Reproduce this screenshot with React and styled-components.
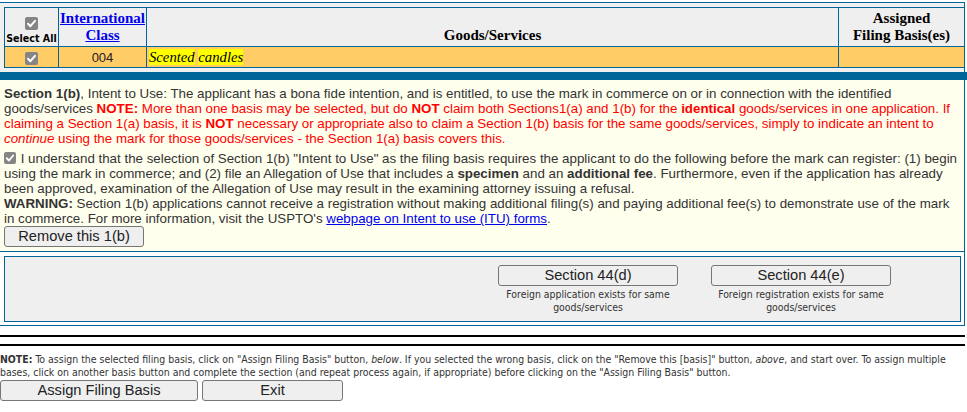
import React from "react";
import styled, { createGlobalStyle } from "styled-components";

const BLUE = "#006699";

const GlobalStyle = createGlobalStyle`
  html, body { margin: 0; padding: 0; background: #ffffff; }
  body { font-family: "Liberation Sans", Arial, sans-serif; }
`;

const Page = styled.div`
  width: 967px;
  padding-top: 2px;
`;

const GoodsPanel = styled.div`
  width: 965px;
  box-sizing: border-box;
  border-top: 1px solid ${BLUE};
  border-right: 1px solid ${BLUE};
  background: #f0f0f0;
  padding: 4px 0 4px 4px;
`;

const GoodsTable = styled.table`
  border-collapse: collapse;
  table-layout: fixed;
  width: 960px;
`;

const Col = styled.col`
  width: ${(p) => p.$w}px;
`;

const HeadCell = styled.th`
  border: 1px solid ${BLUE};
  background: #efefef;
  padding: 0 1px 3px;
  vertical-align: bottom;
  text-align: center;
  font-family: "Liberation Serif", "Times New Roman", serif;
  font-size: 15px;
  line-height: 16.5px;
  font-weight: bold;
  color: #000;
  height: 35px;
`;

const HeadLink = styled.a`
  color: #0000ee;
  text-decoration: underline;
`;

const SelectAllLabel = styled.span`
  display: block;
  margin: 0 -2px -2px;
  white-space: nowrap;
  font-family: "DejaVu Sans Condensed", "DejaVu Sans", sans-serif;
  font-size: 10.6px;
  line-height: 13px;
  font-weight: bold;
  color: #000;
`;

const Row = styled.tr`
  background: #ffcc66;
  height: 21px;
`;

const Cell = styled.td`
  border: 1px solid ${BLUE};
  padding: 0 2px;
  text-align: ${(p) => p.$align || "left"};
  vertical-align: middle;
  font-family: ${(p) =>
    p.$serif
      ? '"Liberation Serif", "Times New Roman", serif'
      : '"Liberation Sans", Arial, sans-serif'};
  font-size: ${(p) => (p.$serif ? "14.7px" : "13px")};
  color: #222;
`;

const Highlight = styled.span`
  background: #ffff00;
  font-style: italic;
  color: #000;
`;

const CheckBox = styled.span`
  display: ${(p) => (p.$block ? "block" : "inline-block")};
  width: ${(p) => p.$size || 13}px;
  height: ${(p) => p.$size || 13}px;
  margin: ${(p) => p.$margin || "0"};
  border-radius: 2px;
  background: #858585;
  vertical-align: ${(p) => p.$valign || "middle"};
  position: relative;
  & > svg {
    position: absolute;
    left: 0;
    top: 0;
    width: 100%;
    height: 100%;
  }
`;

const Check = (props) => (
  <CheckBox {...props}>
    <svg viewBox="0 0 13 13">
      <path
        d="M3 6.8 L5.4 9.2 L10 3.8"
        fill="none"
        stroke="#ffffff"
        strokeWidth="2"
        strokeLinecap="round"
        strokeLinejoin="round"
      />
    </svg>
  </CheckBox>
);

const Band = styled.div`
  height: 8px;
  width: 967px;
  background: ${BLUE};
`;

const BasisPanel = styled.div`
  width: 965px;
  box-sizing: border-box;
  background: #ffffee;
  border-right: 1px solid ${BLUE};
  border-bottom: 1px solid ${BLUE};
  padding: 6px 2px 4px 4px;
  font-family: "Liberation Sans", Arial, sans-serif;
  font-size: 13.33px;
  line-height: 15px;
  color: #333;
`;

const Para = styled.p`
  margin: 0 0 ${(p) => p.$gap || 0}px 0;
`;

const Red = styled.span`
  color: #ff0000;
`;

const Link = styled.a`
  color: #0000ee;
  text-decoration: underline;
`;

const Button = styled.button`
  display: block;
  box-sizing: border-box;
  width: ${(p) => p.$w}px;
  height: 21px;
  margin: ${(p) => p.$margin || "0"};
  padding: 0;
  background: #efefef;
  border: 1px solid #767676;
  border-radius: 3px;
  font-family: "Liberation Sans", Arial, sans-serif;
  font-size: 14.67px;
  line-height: 19px;
  color: #222;
  text-align: center;
`;

const OtherPanel = styled.div`
  width: 965px;
  box-sizing: border-box;
  border-right: 1px solid ${BLUE};
  border-bottom: 1px solid ${BLUE};
  padding: 4px 3px 3px 4px;
`;

const OtherBox = styled.div`
  box-sizing: border-box;
  height: 66px;
  border: 1px solid ${BLUE};
  background: #efefef;
  padding: 8px 0 0 0;
  display: grid;
  grid-template-columns: repeat(4, 213px);
  justify-content: center;
  align-items: start;
`;

const Option = styled.div`
  display: flex;
  flex-direction: column;
  align-items: center;
  transform: translateX(-1px);
`;

const Caption = styled.div`
  margin-top: 2px;
  font-family: "DejaVu Sans Condensed", "DejaVu Sans", sans-serif;
  font-size: 10.4px;
  line-height: 13px;
  color: #333;
  text-align: center;
  width: 190px;
`;

const Rule = styled.div`
  width: 965px;
  height: 2px;
  background: #000;
  margin-top: ${(p) => p.$top}px;
`;

const Note = styled.p`
  margin: 7px 0 0 0;
  width: 962px;
  font-family: "DejaVu Sans Condensed", "DejaVu Sans", sans-serif;
  font-size: 10.45px;
  line-height: 13px;
  color: #333;
`;

const Actions = styled.div`
  display: flex;
  gap: 4px;
  margin-top: 1px;
`;

export default function App() {
  return (
    <>
      <GlobalStyle />
      <Page>
        <GoodsPanel>
          <GoodsTable>
            <colgroup>
              <Col $w={54} />
              <Col $w={88} />
              <Col $w={692} />
              <Col $w={126} />
            </colgroup>
            <thead>
              <tr>
                <HeadCell>
                  <Check $block $margin="0 auto 2px" />
                  <SelectAllLabel>Select All</SelectAllLabel>
                </HeadCell>
                <HeadCell>
                  <HeadLink href="#">
                    International
                    <br />
                    Class
                  </HeadLink>
                </HeadCell>
                <HeadCell>Goods/Services</HeadCell>
                <HeadCell>
                  Assigned
                  <br />
                  Filing Basis(es)
                </HeadCell>
              </tr>
            </thead>
            <tbody>
              <Row>
                <Cell $align="center">
                  <Check />
                </Cell>
                <Cell $align="center">004</Cell>
                <Cell $serif>
                  <Highlight>Scented</Highlight> <Highlight>candles</Highlight>
                </Cell>
                <Cell />
              </Row>
            </tbody>
          </GoodsTable>
        </GoodsPanel>
        <Band />
        <BasisPanel>
          <Para $gap={5}>
            <b>Section 1(b)</b>, Intent to Use: The applicant has a bona fide
            intention, and is entitled, to use the mark in commerce on or in
            connection with the identified goods/services{" "}
            <Red>
              <b>NOTE:</b> More than one basis may be selected, but do{" "}
              <b>NOT</b> claim both Sections1(a) and 1(b) for the{" "}
              <b>identical</b> goods/services in one application. If claiming
              a Section 1(a) basis, it is <b>NOT</b> necessary or appropriate
              also to claim a Section 1(b) basis for the same goods/services,
              simply to indicate an intent to <i>continue</i> using the mark
              for those goods/services - the Section 1(a) basis covers this.
            </Red>
          </Para>
          <Para>
            <Check $size={12} $margin="0 1px 0 0" $valign="-1px" /> I
            understand that the selection of Section 1(b) "Intent to Use" as
            the filing basis requires the applicant to do the following before
            the mark can register: (1) begin using the mark in commerce; and
            (2) file an Allegation of Use that includes a <b>specimen</b> and
            an <b>additional fee</b>. Furthermore, even if the application has
            already been approved, examination of the Allegation of Use may
            result in the examining attorney issuing a refusal.
            <br />
            <b>WARNING:</b> Section 1(b) applications cannot receive a
            registration without making additional filing(s) and paying
            additional fee(s) to demonstrate use of the mark in commerce. For
            more information, visit the USPTO's{" "}
            <Link href="#">webpage on Intent to use (ITU) forms</Link>.
          </Para>
          <Button $w={140}>Remove this 1(b)</Button>
        </BasisPanel>
        <OtherPanel>
          <OtherBox>
            <Option />
            <Option />
            <Option>
              <Button $w={180}>Section 44(d)</Button>
              <Caption>Foreign application exists for same goods/services</Caption>
            </Option>
            <Option>
              <Button $w={180}>Section 44(e)</Button>
              <Caption>Foreign registration exists for same goods/services</Caption>
            </Option>
          </OtherBox>
        </OtherPanel>
        <Rule $top={9} />
        <Rule $top={7} />
        <Note>
          <b>NOTE:</b> To assign the selected filing basis, click on "Assign
          Filing Basis" button, <i>below</i>. If you selected the wrong basis,
          click on the "Remove this [basis]" button, <i>above</i>, and start
          over. To assign multiple bases, click on another basis button and
          complete the section (and repeat process again, if appropriate)
          before clicking on the "Assign Filing Basis" button.
        </Note>
        <Actions>
          <Button $w={198}>Assign Filing Basis</Button>
          <Button $w={141}>Exit</Button>
        </Actions>
      </Page>
    </>
  );
}
